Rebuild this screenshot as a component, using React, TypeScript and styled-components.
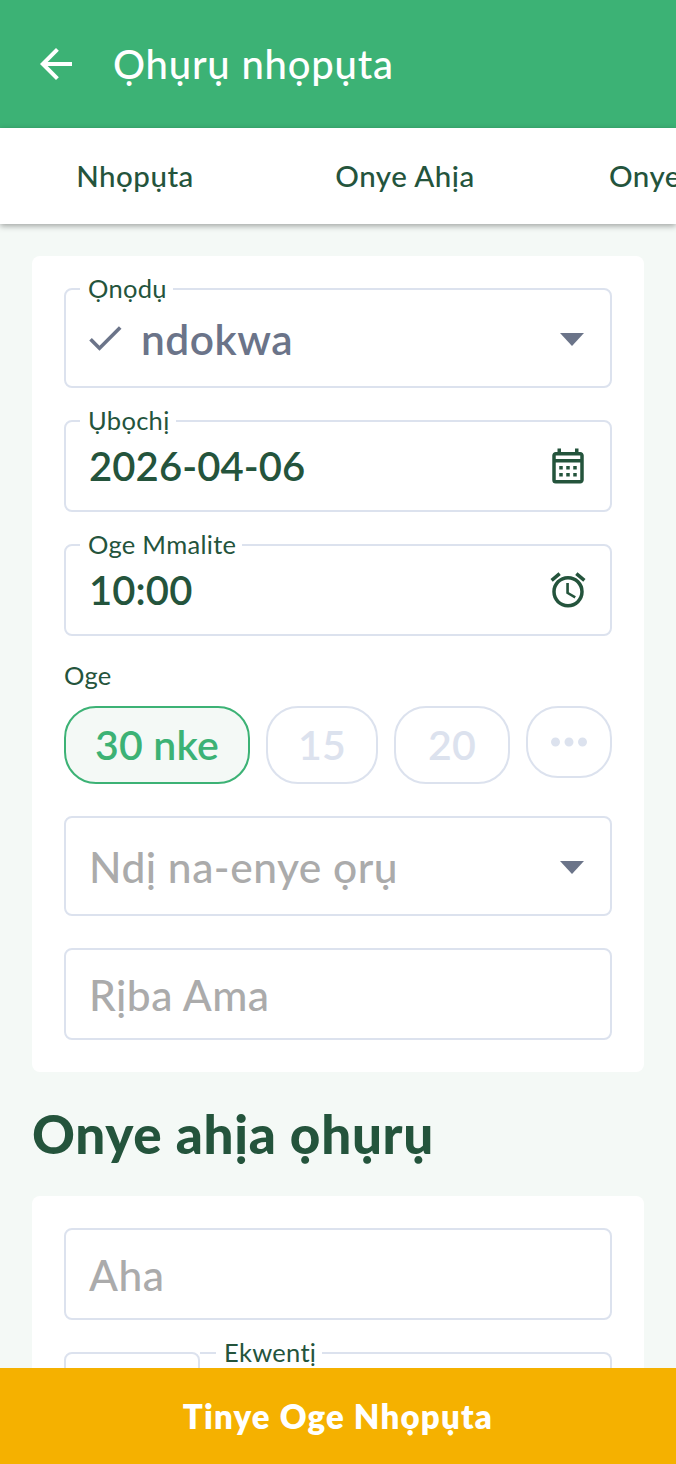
import React from "react";
import styled, { createGlobalStyle } from "styled-components";
import { MdArrowBack, MdCheck, MdOutlineAccessAlarm, MdOutlineCalendarMonth, MdMoreHoriz } from "react-icons/md";

const colors = {
  green: "#3CB275",
  dark: "#24543C",
  line: "#DCE2EE",
  slate: "#6B7489",
  hint: "#ABABAB",
  mist: "#F4F9F6",
  amber: "#F5B100",
};

const GlobalStyle = createGlobalStyle`
  html, body {
    margin: 0;
    height: 100%;
    overflow: hidden;
    font-family: "Lato", "Noto Sans", sans-serif;
    background: ${colors.mist};
  }
  #root { height: 100%; }
  * { box-sizing: border-box; }
`;

const Screen = styled.div`
  height: 1464px;
  display: flex;
  flex-direction: column;
  overflow: hidden;
`;

const Header = styled.header`
  flex: none;
  height: 128px;
  background: ${colors.green};
  color: #fff;
  display: flex;
  align-items: center;
  gap: 33px;
  padding-left: 32px;
`;

const BackButton = styled.span`
  display: flex;
  font-size: 48px;
`;

const Title = styled.h1`
  margin: 0;
  font-size: 40px;
  font-weight: 500;
  letter-spacing: 0.8px;
`;

const Tabs = styled.nav`
  flex: none;
  height: 96px;
  background: #fff;
  display: flex;
  overflow: hidden;
  box-shadow: 0 2px 6px rgba(0, 0, 0, 0.35);
  position: relative;
`;

const Tab = styled.span`
  flex: none;
  width: 270px;
  padding-bottom: 2px;
  display: flex;
  align-items: center;
  justify-content: center;
  color: ${colors.dark};
  font-size: 29.5px;
  font-weight: 500;
  letter-spacing: 0.5px;
`;

const Body = styled.main`
  flex: 1;
  min-height: 0;
  overflow: hidden;
  padding: 32px 32px 0;
`;

const Card = styled.section`
  background: #fff;
  border-radius: 8px;
  padding: 32px;
  display: flex;
  flex-direction: column;
  gap: 32px;
`;

const Field = styled.div<{ $height?: number }>`
  position: relative;
  height: ${(p) => p.$height ?? 92}px;
  border: 2px solid ${colors.line};
  border-radius: 8px;
  display: flex;
  align-items: center;
  justify-content: space-between;
  padding: 0 21px 0 23px;
  background: #fff;
`;

const FloatLabel = styled.label`
  position: absolute;
  top: -16px;
  left: 14px;
  padding: 0 6px 0 8px;
  background: #fff;
  color: ${colors.dark};
  font-size: 25.5px;
  line-height: 28px;
  letter-spacing: 0.3px;
`;

const Value = styled.span`
  font-size: 40px;
  letter-spacing: 0.1px;
  font-weight: 600;
  color: ${colors.dark};
`;

const SelectedValue = styled.span`
  font-size: 42.5px;
  letter-spacing: 0.5px;
  font-weight: 600;
  color: ${colors.slate};
`;

const Hint = styled.span`
  font-size: 42.5px;
  letter-spacing: 0.5px;
  font-weight: 500;
  color: ${colors.hint};
`;

const Selected = styled.span`
  display: flex;
  align-items: center;
  gap: 14px;
  margin-left: -6px;
  color: ${colors.slate};
  font-size: 44px;
`;

const Caret = styled.span`
  width: 0;
  height: 0;
  border-left: 12px solid transparent;
  border-right: 12px solid transparent;
  border-top: 13px solid ${colors.slate};
  margin: 2px 5px 0 0;
`;

const TrailingIcon = styled.span`
  display: flex;
  color: ${colors.dark};
  font-size: 42px;
`;

const DurationGroup = styled.div`
  margin-top: -9px;
  display: flex;
  flex-direction: column;
  gap: 15px;
`;

const GroupLabel = styled.span`
  color: ${colors.dark};
  font-size: 25.5px;
  line-height: 32px;
  letter-spacing: 0.3px;
`;

const Chips = styled.div`
  display: flex;
  align-items: flex-start;
  justify-content: space-between;
`;

const Chip = styled.span<{ $active?: boolean; $width: number; $height?: number }>`
  width: ${(p) => p.$width}px;
  height: ${(p) => p.$height ?? 78}px;
  padding-bottom: 2px;
  border-radius: 32px;
  border: 2px solid ${(p) => (p.$active ? colors.green : colors.line)};
  background: ${(p) => (p.$active ? colors.mist : "#fff")};
  color: ${(p) => (p.$active ? colors.green : colors.line)};
  display: flex;
  align-items: center;
  justify-content: center;
  font-size: 41px;
  font-weight: 600;
  letter-spacing: 0.2px;
`;

const MoreChip = styled(Chip)`
  font-size: 54px;
  padding-bottom: 0;
`;

const SectionTitle = styled.h2`
  margin: 32px 0;
  height: 60px;
  color: ${colors.dark};
  font-size: 53px;
  line-height: 60px;
  font-weight: 900;
  letter-spacing: 0.7px;
`;

const PhoneRow = styled.div`
  display: flex;
`;

const CountryField = styled(Field)`
  flex: none;
  width: 136px;
`;

const PhoneField = styled(Field)`
  flex: 1;
  border-left: 0;
  border-radius: 0 8px 8px 0;

  ${FloatLabel} {
    left: 16px;
  }
`;

const Footer = styled.button`
  flex: none;
  height: 96px;
  border: 0;
  background: ${colors.amber};
  color: #fff;
  font-family: inherit;
  font-size: 33px;
  font-weight: 800;
  letter-spacing: 1.2px;
  position: relative;
`;

const App: React.FC = () => (
  <Screen>
    <GlobalStyle />
    <Header>
      <BackButton>
        <MdArrowBack />
      </BackButton>
      <Title>Ọhụrụ nhọpụta</Title>
    </Header>
    <Tabs>
      <Tab>Nhọpụta</Tab>
      <Tab>Onye Ahịa</Tab>
      <Tab>Onye Ọrụ</Tab>
    </Tabs>
    <Body>
      <Card>
        <Field $height={100}>
          <FloatLabel>Ọnọdụ</FloatLabel>
          <Selected>
            <MdCheck />
            <SelectedValue>ndokwa</SelectedValue>
          </Selected>
          <Caret />
        </Field>
        <Field>
          <FloatLabel>Ụbọchị</FloatLabel>
          <Value>2026-04-06</Value>
          <TrailingIcon>
            <MdOutlineCalendarMonth />
          </TrailingIcon>
        </Field>
        <Field>
          <FloatLabel>Oge Mmalite</FloatLabel>
          <Value>10:00</Value>
          <TrailingIcon>
            <MdOutlineAccessAlarm />
          </TrailingIcon>
        </Field>
        <DurationGroup>
          <GroupLabel>Oge</GroupLabel>
          <Chips>
            <Chip $active $width={186}>30 nke</Chip>
            <Chip $width={112}>15</Chip>
            <Chip $width={116}>20</Chip>
            <MoreChip $width={86} $height={72}>
              <MdMoreHoriz />
            </MoreChip>
          </Chips>
        </DurationGroup>
        <Field $height={100}>
          <Hint>Ndị na-enye ọrụ</Hint>
          <Caret />
        </Field>
        <Field>
          <Hint>Rịba Ama</Hint>
        </Field>
      </Card>
      <SectionTitle>Onye ahịa ọhụrụ</SectionTitle>
      <Card>
        <Field>
          <Hint>Aha</Hint>
        </Field>
        <PhoneRow>
          <CountryField />
          <PhoneField>
            <FloatLabel>Ekwentị</FloatLabel>
          </PhoneField>
        </PhoneRow>
      </Card>
    </Body>
    <Footer>Tinye Oge Nhọpụta</Footer>
  </Screen>
);

export default App;
